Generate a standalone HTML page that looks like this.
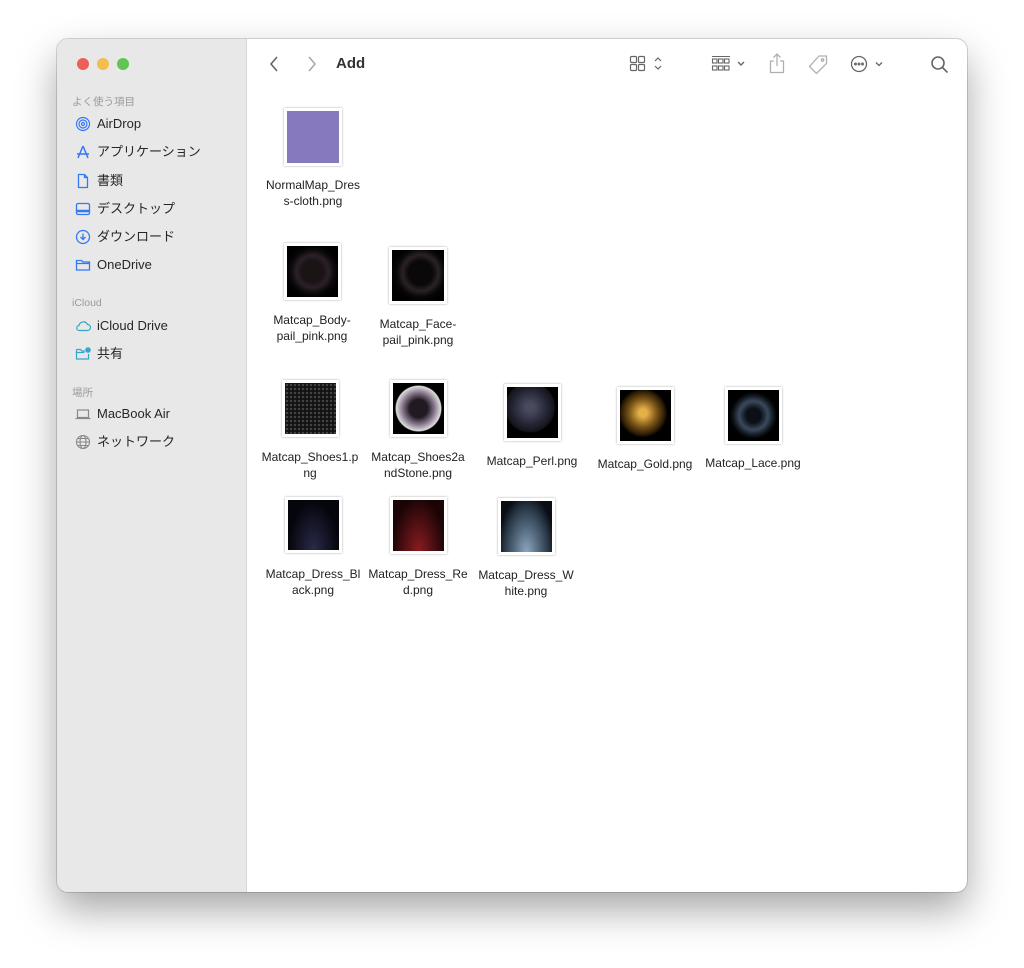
<!DOCTYPE html>
<html><head><meta charset="utf-8"><style>
*{margin:0;padding:0;box-sizing:border-box}
body{width:1024px;height:968px;background:#fff;position:relative;overflow:hidden;font-family:"Liberation Sans","Noto Sans CJK JP",sans-serif}
.win{position:absolute;left:57px;top:39px;width:910px;height:853px;border-radius:11px;background:#fff;box-shadow:0 18px 40px rgba(0,0,0,.35),0 0 0 1px rgba(0,0,0,.15);overflow:hidden}
.side{position:absolute;left:0;top:0;width:190px;height:100%;background:#e8e8e8;border-right:1px solid #d6d6d6}
.dot{position:absolute;top:19px;width:12px;height:12px;border-radius:50%}
.hd{position:absolute;left:15px;font-size:10.5px;color:#9a9a9a}
.it{position:absolute;left:18px;height:18px;line-height:18px;font-size:13px;color:#262626;display:flex;align-items:center;gap:6px}
.it svg{width:16px;height:16px;flex:none}
.t{position:absolute;border:3px solid #fff;box-shadow:0 0 2px rgba(0,0,0,.35);background:#000}
.l{position:absolute;width:110px;text-align:center;font-size:12px;line-height:16px;color:#222}
.tb{position:absolute;color:#6e6e6e}
</style></head><body>
<div class="win">
<div class="side">
<div class="dot" style="left:20px;background:#ec5f57"></div>
<div class="dot" style="left:40px;background:#f4bd4f"></div>
<div class="dot" style="left:60px;background:#61c454"></div>
<div class="hd" style="top:55px">よく使う項目</div>
<div class="it" style="top:76px"><svg viewBox="0 0 16 16" fill="none" stroke="#3478f6" stroke-width="1.2"><circle cx="8" cy="8" r="6.5"/><circle cx="8" cy="8" r="4"/><circle cx="8" cy="8" r="1.5"/></svg>AirDrop</div>
<div class="it" style="top:104px"><svg viewBox="0 0 16 16" fill="none" stroke="#3478f6" stroke-width="1.5"><path d="M8 2L3 14M8 2l5 12M2 10h12"/></svg>アプリケーション</div>
<div class="it" style="top:133px"><svg viewBox="0 0 16 16" fill="none" stroke="#3478f6" stroke-width="1.3"><path d="M3.5 1.5h6l3 3v10h-9z M9.5 1.5v3h3"/></svg>書類</div>
<div class="it" style="top:161px"><svg viewBox="0 0 16 16" fill="none" stroke="#3478f6" stroke-width="1.3"><rect x="1.5" y="2.5" width="13" height="11" rx="1.5"/><path d="M1.5 10h13" stroke-width="2.5"/></svg>デスクトップ</div>
<div class="it" style="top:189px"><svg viewBox="0 0 16 16" fill="none" stroke="#3478f6" stroke-width="1.3"><circle cx="8" cy="8" r="6.5"/><path d="M8 4.5v6M5.5 8l2.5 2.5L10.5 8"/></svg>ダウンロード</div>
<div class="it" style="top:217px"><svg viewBox="0 0 16 16" fill="none" stroke="#3478f6" stroke-width="1.3"><path d="M1.5 3.5h5l1.5 1.5h6.5v8h-13z M1.5 6.5h13"/></svg>OneDrive</div>
<div class="hd" style="top:258px">iCloud</div>
<div class="it" style="top:278px"><svg viewBox="0 0 16 16" fill="none" stroke="#35a5c8" stroke-width="1.2"><path d="M4.5 12.5h8a3 3 0 0 0 0-6 4.5 4.5 0 0 0-8.5 1 2.5 2.5 0 0 0 .5 5z"/></svg>iCloud Drive</div>
<div class="it" style="top:306px"><svg viewBox="0 0 16 16" fill="none" stroke="#35a5c8" stroke-width="1.2"><path d="M1.5 3.5h4l1.5 1.5h3M1.5 3.5v9.5h12v-5M1.5 6.5h8"/><circle cx="13" cy="4" r="2.2" fill="#35a5c8"/></svg>共有</div>
<div class="hd" style="top:346px">場所</div>
<div class="it" style="top:366px"><svg viewBox="0 0 16 16" fill="none" stroke="#888" stroke-width="1.2"><rect x="2.5" y="4" width="11" height="7.5"/><path d="M0.5 12.5h15"/></svg>MacBook Air</div>
<div class="it" style="top:394px"><svg viewBox="0 0 16 16" fill="none" stroke="#888" stroke-width="1.1"><circle cx="8" cy="8" r="6.5"/><ellipse cx="8" cy="8" rx="3" ry="6.5"/><path d="M1.5 8h13M3 4.5h10M3 11.5h10"/></svg>ネットワーク</div>
</div>
<svg class="tb" style="left:212px;top:17px" width="10" height="16"><path d="M8 1L2 8l6 7" fill="none" stroke="#666" stroke-width="1.6"/></svg>
<svg class="tb" style="left:250px;top:17px" width="10" height="16"><path d="M2 1l6 7-6 7" fill="none" stroke="#aaa" stroke-width="1.6"/></svg>
<div style="position:absolute;left:279px;top:16px;font-size:15px;font-weight:bold;color:#333">Add</div>
<svg class="tb" style="left:572px;top:16px" width="40" height="18" fill="none" stroke="#666" stroke-width="1.2"><rect x="1.5" y="1.5" width="6" height="6" rx="1"/><rect x="9.5" y="1.5" width="6" height="6" rx="1"/><rect x="1.5" y="9.5" width="6" height="6" rx="1"/><rect x="9.5" y="9.5" width="6" height="6" rx="1"/><path d="M26 6l3-3 3 3M26 11l3 3 3-3"/></svg>
<svg class="tb" style="left:654px;top:16px" width="40" height="18" fill="none" stroke="#666" stroke-width="1.1"><path d="M1 1.5h18"/><rect x="1.5" y="4" width="4.5" height="4"/><rect x="7.5" y="4" width="4.5" height="4"/><rect x="13.5" y="4" width="4.5" height="4"/><rect x="1.5" y="11" width="4.5" height="4"/><rect x="7.5" y="11" width="4.5" height="4"/><rect x="13.5" y="11" width="4.5" height="4"/><path d="M27 7l3 3 3-3" stroke-width="1.4"/></svg>
<svg class="tb" style="left:711px;top:14px" width="18" height="22" fill="none" stroke="#b0b0b0" stroke-width="1.3"><path d="M9 1v12M5.5 4.5L9 1l3.5 3.5M6 8H2.5v11.5h13V8H12"/></svg>
<svg class="tb" style="left:750px;top:15px" width="22" height="22" fill="none" stroke="#b0b0b0" stroke-width="1.3"><path d="M12 2h7.5v7.5L9.5 19.5 2.5 12.5z"/><circle cx="15.5" cy="6" r="1.2"/></svg>
<svg class="tb" style="left:793px;top:16px" width="36" height="18" fill="none" stroke="#666" stroke-width="1.3"><circle cx="9" cy="9" r="7.5"/><circle cx="5.5" cy="9" r=".8" fill="#666"/><circle cx="9" cy="9" r=".8" fill="#666"/><circle cx="12.5" cy="9" r=".8" fill="#666"/><path d="M26 7.5l3 3 3-3"/></svg>
<svg class="tb" style="left:873px;top:16px" width="20" height="20" fill="none" stroke="#666" stroke-width="1.6"><circle cx="8" cy="8" r="6"/><path d="M12.5 12.5l5 5"/></svg>

<div class="t" style="left:227px;top:69px;width:58px;height:58px;background:#8679bd"></div>
<div class="l" style="left:201px;top:138px">NormalMap_Dres<br>s-cloth.png</div>

<div class="t" style="left:227px;top:204px;width:57px;height:57px;background:radial-gradient(circle at 50% 50%,#1a1417 30%,#2c2028 45%,#0c0a0b 60%,#000 75%)"></div>
<div class="l" style="left:200px;top:273px">Matcap_Body-<br>pail_pink.png</div>
<div class="t" style="left:332px;top:208px;width:58px;height:57px;background:radial-gradient(circle at 55% 45%,#0a0808 30%,#2a2224 45%,#080707 60%,#000 75%)"></div>
<div class="l" style="left:306px;top:277px">Matcap_Face-<br>pail_pink.png</div>

<div class="t" style="left:225px;top:341px;width:57px;height:57px;background:radial-gradient(#444 1px,#111 1.5px) 0 0/4px 4px,#1a1a1a"></div>
<div class="l" style="left:198px;top:410px">Matcap_Shoes1.p<br>ng</div>
<div class="t" style="left:333px;top:341px;width:57px;height:57px;background:radial-gradient(circle,#221a22 25%,#8a7a90 45%,#ddd 62%,#000 65%)"></div>
<div class="l" style="left:306px;top:410px">Matcap_Shoes2a<br>ndStone.png</div>
<div class="t" style="left:447px;top:345px;width:57px;height:57px;background:radial-gradient(circle at 45% 40%,#4a4a5e 10%,#262736 40%,#14141c 58%,#000 62%)"></div>
<div class="l" style="left:420px;top:414px">Matcap_Perl.png</div>
<div class="t" style="left:560px;top:348px;width:57px;height:57px;background:radial-gradient(circle at 45% 45%,#e5b04a 10%,#7a5518 35%,#2a1a05 55%,#000 62%)"></div>
<div class="l" style="left:533px;top:417px">Matcap_Gold.png</div>
<div class="t" style="left:668px;top:348px;width:57px;height:57px;background:radial-gradient(circle,#0c1016 20%,#3a4a5c 40%,#111820 55%,#000 65%)"></div>
<div class="l" style="left:641px;top:416px">Matcap_Lace.png</div>

<div class="t" style="left:228px;top:458px;width:57px;height:56px;background:radial-gradient(ellipse at 50% 100%,#2a2a4a,#05050c 70%)"></div>
<div class="l" style="left:201px;top:527px">Matcap_Dress_Bl<br>ack.png</div>
<div class="t" style="left:333px;top:458px;width:57px;height:57px;background:radial-gradient(ellipse at 50% 100%,#8a1c20,#1a0406 75%)"></div>
<div class="l" style="left:306px;top:527px">Matcap_Dress_Re<br>d.png</div>
<div class="t" style="left:441px;top:459px;width:57px;height:57px;background:radial-gradient(ellipse at 50% 100%,#8ca6c0,#2a3a4a 60%,#0a0e14 80%)"></div>
<div class="l" style="left:414px;top:528px">Matcap_Dress_W<br>hite.png</div>
</div>
</body></html>
